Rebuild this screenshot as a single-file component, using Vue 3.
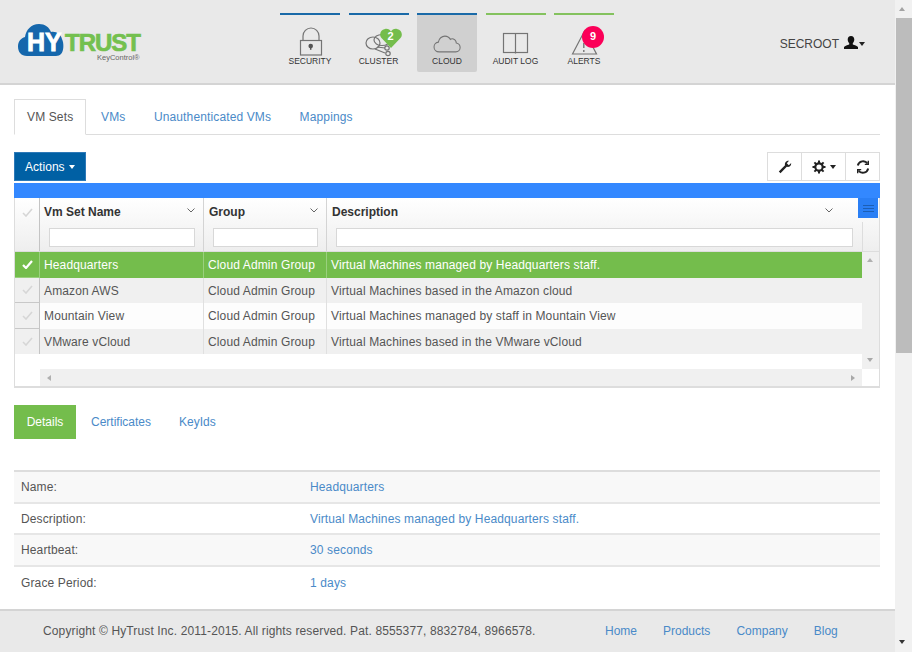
<template>
  <div class="page">
    <div class="main">
      <header class="top">
        <div class="logo">
          <svg width="126" height="46" viewBox="0 0 126 46">
            <path d="M11 37C5 37 2 33 2 27.500 2 22.500 5 19 9 18 10 11 15 5 23 5c6 0 10 3 12 8 5-1 10 2 11 7 2 4 2 12-1 15-1 1-3 2-5 2z" fill="#1567ac"/>
            <text x="11" y="32" class="logo-hy">HY</text>
            <text x="49" y="32" class="logo-trust">TRUST</text>
            <text x="81" y="41" class="logo-kc">KeyControl®</text>
          </svg>
        </div>
        <nav class="nav">
          <a v-for="n in navs" :key="n.label" class="nav-item" :class="[n.tone, { on: n.active }]">
            <svg class="nav-icon" width="48" height="34" viewBox="0 0 48 34" fill="none" stroke="#747474" stroke-width="1.200">
              <g v-if="n.icon === 'lock'">
                <path d="M17 16v-4a8 8 0 0 1 16 0v4"/>
                <rect x="14.500" y="16.500" width="21" height="14.500"/>
                <circle cx="24.700" cy="22" r="2.300" fill="#555" stroke="none"/>
                <path d="M24.700 22v3.800" stroke="#555" stroke-width="1.500"/>
              </g>
              <g v-else-if="n.icon === 'cluster'">
                <ellipse cx="18" cy="19" rx="7" ry="6"/>
                <ellipse cx="27" cy="16" rx="8" ry="5.500"/>
                <path d="M22 23l8 1M20 25l10 4"/>
                <circle cx="32" cy="24" r="2.200"/>
                <circle cx="33" cy="29.500" r="2.200"/>
              </g>
              <path v-else-if="n.icon === 'cloud'" transform="translate(3.200 0) scale(.87 .93)" d="M15 30c-3.500 0-6-2.300-6-5.300 0-2.800 2.200-5 5-5.200.6-4 4-6.500 7.500-6.500 2.700 0 5 1.300 6.300 3.500 1-.7 2.400-.8 3.500-.4 2 .7 3.200 2.500 3.300 4.400 2.600.5 4.400 2.400 4.400 4.800 0 2.700-2.200 4.700-5 4.700z"/>
              <g v-else-if="n.icon === 'book'">
                <rect x="11.500" y="9.500" width="24" height="19"/>
                <path d="M23.500 9.500v20"/>
              </g>
              <g v-else>
                <path d="M12.500 30L24.500 7l12 23z"/>
                <path d="M23.800 19v5M23.800 26v2" stroke-width="1.400"/>
              </g>
            </svg>
            <span class="nav-label">{{ n.label }}</span>
            <span v-if="n.icon === 'cluster'" class="heart">
              <svg width="22" height="20" viewBox="0 0 22 21" preserveAspectRatio="none"><path d="M11 21L1.500 10.500C-1 7.500 0 2 5 1c3-.5 5 1 6 3 1-2 3-3.500 6-3 5 1 6 6.500 3.500 9.500z" fill="#74bd4c"/></svg>
              <b>2</b>
            </span>
            <span v-if="n.icon === 'alert'" class="alert-badge">9</span>
          </a>
        </nav>
        <div class="user">
          <span>SECROOT</span>
          <svg width="14" height="13" viewBox="0 0 14 13"><path d="M7 0c2.200 0 3.300 1.600 3.300 3.500 0 1.600-.7 2.800-1.500 3.600v1.300c1.800.7 4.200 1.200 5.200 2.600v2H0v-2c1-1.400 3.400-1.900 5.200-2.600V7.100C4.400 6.300 3.700 5.100 3.700 3.500 3.700 1.600 4.800 0 7 0z" fill="#111"/></svg>
          <i class="caret dark"></i>
        </div>
      </header>

      <main class="content">
        <div class="tabs">
          <a class="tab active">VM Sets</a>
          <a class="tab">VMs</a>
          <a class="tab">Unauthenticated VMs</a>
          <a class="tab">Mappings</a>
        </div>

        <div class="toolbar">
          <button class="actions">Actions <i class="caret light"></i></button>
          <div class="tools">
            <button class="tool w35">
              <svg width="14" height="14" viewBox="0 0 14 14"><path d="M.8 11.500L7 5.200C6.500 3 8 .5 11 .8L8.800 3.200 10.800 5.200 13.200 3c.2 2.900-2.200 4.400-4.400 3.800L2.500 13.200z" fill="#222"/></svg>
            </button>
            <button class="tool w44">
              <svg width="14" height="14" viewBox="0 0 14 14"><circle cx="7" cy="7" r="3.700" fill="none" stroke="#222" stroke-width="2.200"/><path d="M7 .5v3M7 10.500v3M.5 7h3M10.500 7h3M2.400 2.400l2 2M9.600 9.600l2 2M11.600 2.400l-2 2M4.400 9.600l-2 2" stroke="#222" stroke-width="2"/></svg>
              <i class="caret dark"></i>
            </button>
            <button class="tool w35">
              <svg width="14" height="14" viewBox="0 0 14 14" fill="none" stroke="#222" stroke-width="1.900"><path d="M1.800 5.500A5.400 5.400 0 0 1 11.500 3.500"/><path d="M12.200 8.500A5.400 5.400 0 0 1 2.500 10.500"/><path d="M12.300.8v3.600H8.800M1.700 13.200V9.600h3.500" stroke-width="1.400"/></svg>
            </button>
          </div>
        </div>

        <div class="bluebar"></div>

        <div class="grid">
          <div class="ghead">
            <div class="hcell c0"><svg class="chk" width="11" height="9" viewBox="0 0 11 9"><path d="M1 5l3 3 6-7" fill="none" stroke="#d6d6d6" stroke-width="1.600"/></svg></div>
            <div v-for="h in heads" :key="h.label" class="hcell" :class="h.cls">
              <div class="htitle">
                <span>{{ h.label }}</span>
                <svg width="8" height="5" viewBox="0 0 8 5"><path d="M.5.500L4 4 7.500.500" fill="none" stroke="#666"/></svg>
              </div>
              <input class="filter" />
            </div>
            <div class="hend">
              <div class="menu-btn"><i></i><i></i><i></i></div>
              <div class="hend-fill"></div>
            </div>
          </div>
          <div class="gbody">
            <div class="rows">
              <div v-for="(r, i) in rows" :key="r[0]" class="row" :class="{ selected: i === 0, odd: i % 2 === 1 }">
                <div class="cell c0">
                  <svg width="11" height="9" viewBox="0 0 11 9"><path d="M1 5l3 3 6-7" fill="none" :stroke="i === 0 ? '#fff' : '#d6d6d6'" :stroke-width="i === 0 ? 2.200 : 1.600"/></svg>
                </div>
                <div class="cell c1">{{ r[0] }}</div>
                <div class="cell c2">{{ r[1] }}</div>
                <div class="cell c3">{{ r[2] }}</div>
              </div>
            </div>
            <div class="vbar"><i class="arr up"></i><i class="arr down"></i></div>
          </div>
          <div class="gfoot">
            <div class="hbar"><i class="arr left"></i><i class="arr right"></i></div>
          </div>
        </div>

        <div class="subtabs">
          <a class="subtab active">Details</a>
          <a class="subtab">Certificates</a>
          <a class="subtab">KeyIds</a>
        </div>

        <div class="details">
          <div v-for="d in details" :key="d[0]" class="drow">
            <span class="dkey">{{ d[0] }}</span>
            <a class="dval">{{ d[1] }}</a>
          </div>
        </div>
      </main>

      <footer class="foot">
        <span class="copy">Copyright © HyTrust Inc. 2011-2015. All rights reserved. Pat. 8555377, 8832784, 8966578.</span>
        <div class="flinks">
          <a>Home</a><a>Products</a><a>Company</a><a>Blog</a>
        </div>
      </footer>
    </div>

    <div class="pagebar">
      <i class="arr up dark"></i>
      <div class="thumb"></div>
      <i class="arr down black"></i>
    </div>
  </div>
</template>

<script setup>
const navs = [
  { label: 'SECURITY', icon: 'lock', tone: 'blue' },
  { label: 'CLUSTER', icon: 'cluster', tone: 'blue' },
  { label: 'CLOUD', icon: 'cloud', tone: 'blue', active: true },
  { label: 'AUDIT LOG', icon: 'book', tone: 'green' },
  { label: 'ALERTS', icon: 'alert', tone: 'green' },
]
const heads = [
  { label: 'Vm Set Name', cls: 'c1' },
  { label: 'Group', cls: 'c2' },
  { label: 'Description', cls: 'c3h' },
]
const rows = [
  ['Headquarters', 'Cloud Admin Group', 'Virtual Machines managed by Headquarters staff.'],
  ['Amazon AWS', 'Cloud Admin Group', 'Virtual Machines based in the Amazon cloud'],
  ['Mountain View', 'Cloud Admin Group', 'Virtual Machines managed by staff in Mountain View'],
  ['VMware vCloud', 'Cloud Admin Group', 'Virtual Machines based in the VMware vCloud'],
]
const details = [
  ['Name:', 'Headquarters'],
  ['Description:', 'Virtual Machines managed by Headquarters staff.'],
  ['Heartbeat:', '30 seconds'],
  ['Grace Period:', '1 days'],
]
</script>

<style>
html, body { margin: 0; overflow: hidden; }
</style>

<style scoped>
.page { display: flex; width: 912px; height: 652px; overflow: hidden; font-family: "Liberation Sans", Arial, sans-serif; font-size: 12px; letter-spacing: .13px; color: #555; background: #fff; }
.main { width: 895px; height: 652px; display: flex; flex-direction: column; }
.top { height: 85px; flex: none; box-sizing: border-box; background: #e9e9e9; border-bottom: 2px solid #d4d4d4; display: flex; }
.logo { width: 280px; flex: none; padding: 19px 0 0 16px; box-sizing: border-box; letter-spacing: 0; }
.logo svg { display: block; overflow: visible; }
.logo-hy { font: 700 25px "Liberation Sans", sans-serif; fill: #fff; stroke: #fff; stroke-width: .8px; }
.logo-trust { font: 700 24px "Liberation Sans", sans-serif; fill: #74c04f; stroke: #74c04f; stroke-width: .7px; letter-spacing: -1px; }
.logo-kc { font: 7.500px "Liberation Sans", sans-serif; fill: #666; }
.nav { display: flex; gap: 8.500px; padding-top: 13px; width: 334px; flex: none; }
.nav-item { width: 60px; height: 59px; border-top: 2px solid #1a6aa8; box-sizing: border-box; display: flex; flex-direction: column; align-items: center; position: relative; border-radius: 0 0 2px 2px; }
.nav-item.green { border-top-color: #84c25e; }
.nav-item.on { background: #d0d0d0; }
.nav-icon { display: block; margin-top: 9px; flex: none; }
.nav-label { font-size: 8.500px; color: #333; line-height: 11px; margin-top: -2px; letter-spacing: 0; white-space: nowrap; }
.heart { position: absolute; left: 31px; top: 13px; width: 22px; height: 20px; color: #fff; text-align: center; }
.heart svg { position: absolute; left: 0; top: 0; }
.heart b { position: relative; font-size: 11px; line-height: 17px; display: block; }
.alert-badge { position: absolute; left: 28px; top: 11px; width: 22px; height: 22px; border-radius: 50%; background: #fb0058; color: #fff; font-weight: 700; font-size: 11px; line-height: 20px; text-align: center; }
.user { margin-left: auto; padding: 37px 30px 0 0; display: flex; gap: 4px; align-items: flex-start; font-size: 12px; line-height: 14px; letter-spacing: 0; color: #444; }
.user svg { margin-top: -1px; margin-left: 1px; }
.user .caret { margin-top: 5px; margin-left: -3px; }
.caret { display: inline-block; width: 0; height: 0; border-left: 4px solid transparent; border-right: 4px solid transparent; border-top: 4px solid #fff; vertical-align: middle; }
.caret.dark { border-top-color: #222; border-left-width: 3.500px; border-right-width: 3.500px; }
.caret.light { border-top-color: #fff; border-left-width: 3.500px; border-right-width: 3.500px; margin-left: 1px; }
.content { flex: 1; padding: 14px 15px 0 14px; box-sizing: border-box; min-height: 0; }
.tabs { display: flex; height: 36px; border-bottom: 1px solid #ddd; box-sizing: border-box; }
.tab { padding: 0 14.250px; line-height: 37px; color: #4a8ac8; white-space: nowrap; }
.tab.active { color: #555; background: #fff; border: 1px solid #ddd; border-bottom-color: #fff; height: 36px; padding: 0 12px; line-height: 35px; box-sizing: border-box; margin-right: .5px; }
.toolbar { display: flex; justify-content: space-between; margin-top: 17px; height: 29px; }
.actions { width: 72px; height: 29px; border: 1px solid #2d79b8; background: #0060a4; color: #fff; font: 12px "Liberation Sans", sans-serif; letter-spacing: .05px; padding: 0; }
.tools { display: flex; }
.tool { height: 29px; padding: 0; background: #fff; border: 1px solid #ddd; margin-left: -1px; display: flex; align-items: center; justify-content: center; gap: 4px; }
.w35 { width: 35px; }
.w44 { width: 45px; }
.bluebar { height: 15px; margin-top: 2px; background: #3388ff; }
.grid { border: solid #ddd; border-width: 0 1px 2px 1px; width: 866px; box-sizing: border-box; }
.ghead { height: 54px; display: flex; background: linear-gradient(#fff, #eee); border-bottom: 1px solid #ddd; box-sizing: border-box; }
.hcell { box-sizing: border-box; border-right: 1px solid #d4d4d4; padding: 0 4px; }
.ghead .c0 { display: flex; justify-content: center; padding: 10px 0 0; }
.chk { display: block; }
.c0 { width: 25px; flex: none; border-right: 1px solid #c4c4c4 !important; box-sizing: border-box; }
.c1 { width: 164px; flex: none; }
.c2 { width: 123px; flex: none; }
.c3h { width: 531px; flex: none; border-right: 0; }
.c3 { flex: 1; }
.htitle { display: flex; justify-content: space-between; align-items: center; height: 28px; font-weight: 700; font-size: 12px; letter-spacing: 0; padding-right: 4px; color: #333; }
.c2 .htitle, .c3h .htitle { padding-left: 1px; }
.c3h .htitle { padding-right: 21px; }
.htitle svg { margin-top: -4px; }
.filter { display: block; width: calc(100% - 9px); margin: 2px 4px 0 5px; height: 19px; box-sizing: border-box; border: 1px solid #d8d8d8; background: #fff; padding: 0; outline: 0; }
.c3h .filter { width: calc(100% - 6px); }
.hend { flex: 1; position: relative; display: flex; flex-direction: column; }
.menu-btn { position: absolute; left: 0; top: 0; width: 20px; height: 20px; background: #2a7ff5; display: flex; flex-direction: column; justify-content: center; gap: 2px; align-items: center; }
.menu-btn i { width: 11px; height: 1px; background: #1c5fb5; }
.hend-fill { margin-top: 24px; flex: 1; border-left: 1px solid #ddd; margin-left: 4px; }
.gbody { display: flex; height: 117px; }
.rows { width: 847px; flex: none; }
.row { display: flex; height: 25.500px; line-height: 27px; background: #fdfdfd; color: #555; }
.row.odd { background: #f0f0f0; }
.row.selected { background: #74bd4c; color: #fff; }
.cell { box-sizing: border-box; padding-left: 4px; white-space: nowrap; border-right: 1px solid #e0e0e0; }
.row.selected .cell { border-right-color: #9ad07e; }
.cell.c0 { display: flex; align-items: center; justify-content: center; padding: 0; background: #f0f0f0; border-bottom: 1px solid #c8c8c8; }
.row:last-child .c0 { border-bottom: 0; }
.row.selected .c0 { background: #74bd4c; border-color: #9ad07e !important; }
.cell.c3 { border-right: 0; }
.vbar { flex: 1; position: relative; background: #f0f0f0; }
.arr { position: absolute; width: 0; height: 0; }
.up { border-left: 3.500px solid transparent; border-right: 3.500px solid transparent; border-bottom: 4px solid #b0b0b0; left: 5px; top: 6px; }
.down { border-left: 3.500px solid transparent; border-right: 3.500px solid transparent; border-top: 4px solid #a8a8a8; left: 5px; bottom: 7px; }
.left { border-top: 3.500px solid transparent; border-bottom: 3.500px solid transparent; border-right: 4px solid #b0b0b0; left: 7px; top: 6px; }
.right { border-top: 3.500px solid transparent; border-bottom: 3.500px solid transparent; border-left: 4px solid #a8a8a8; right: 7px; top: 6px; }
.gfoot { height: 17px; box-sizing: border-box; padding: 0 17px 0 25px; }
.hbar { height: 17px; background: #f0f0f0; position: relative; }
.subtabs { display: flex; margin-top: 17px; height: 34px; letter-spacing: 0; }
.subtab { padding: 0 13px 0 15px; line-height: 35px; color: #4a8ac8; white-space: nowrap; }
.subtab.active { background: #74bd4c; color: #fff; padding: 0; width: 62px; box-sizing: border-box; text-align: center; }
.details { margin-top: 31px; border-top: 2px solid #ddd; }
.drow { height: 31.700px; box-sizing: border-box; display: flex; align-items: center; border-bottom: 2px solid #e6e6e6; padding-left: 7px; }
.drow:nth-child(odd) { background: #f8f8f8; }
.drow:last-child { border-bottom: 0; background: #fff; }
.dkey { width: 289px; flex: none; color: #555; }
.dval { color: #4a8ac8; }
.foot { height: 43px; flex: none; box-sizing: border-box; background: #e9e9e9; border-top: 2px solid #d4d4d4; display: flex; padding-left: 43px; line-height: 40px; color: #555; }
.copy { width: 562px; flex: none; white-space: nowrap; }
.flinks { display: flex; gap: 26px; color: #4a8ac8; letter-spacing: 0; }
.pagebar { width: 17px; flex: none; height: 652px; background: #f1f1f1; position: relative; }
.pagebar .up.dark { top: 7px; left: 4px; border-bottom-color: #a3a3a3; }
.pagebar .down.black { bottom: 8px; left: 4px; border-top-color: #333; }
.thumb { margin: 18px 0 0 1px; width: 16px; height: 335px; background: #bcbcbc; }
</style>
